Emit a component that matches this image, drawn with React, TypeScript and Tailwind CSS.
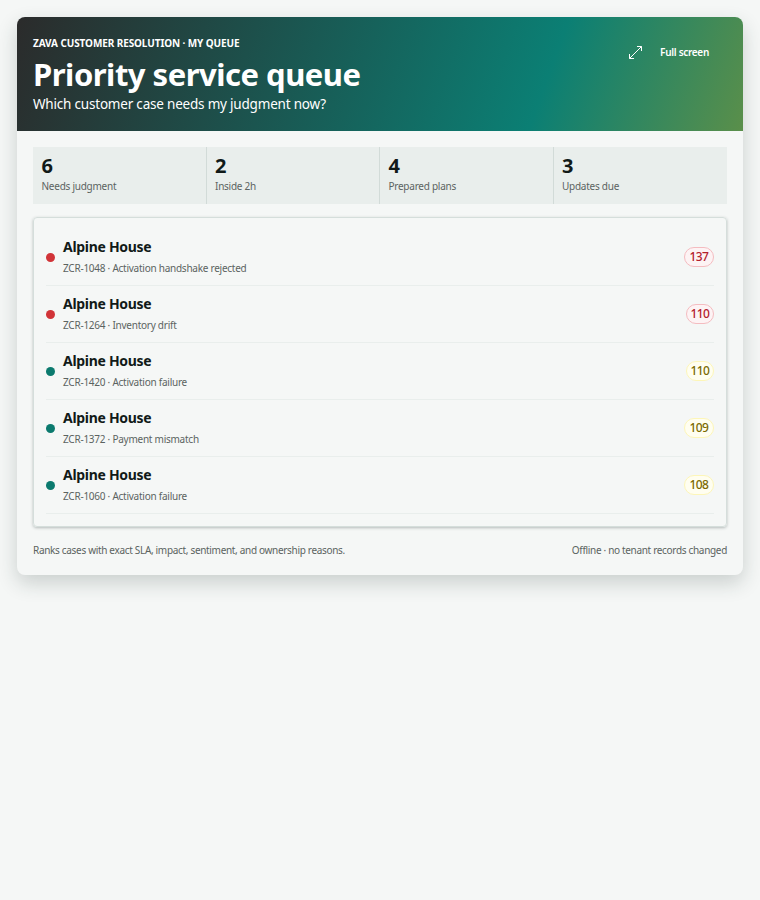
import React from "react";

const rows = [
  { id: "ZCR-1048", reason: "Activation handshake rejected", score: "137", red: true, w: "w-[30px]" },
  { id: "ZCR-1264", reason: "Inventory drift", score: "110", red: true, w: "w-[28px]" },
  { id: "ZCR-1420", reason: "Activation failure", score: "110", red: false, w: "w-[28px]" },
  { id: "ZCR-1372", reason: "Payment mismatch", score: "109", red: false, w: "w-[30px]" },
  { id: "ZCR-1060", reason: "Activation failure", score: "108", red: false, w: "w-[30px]" },
];

const stats = [
  { n: "6", label: "Needs judgment" },
  { n: "2", label: "Inside 2h" },
  { n: "4", label: "Prepared plans" },
  { n: "3", label: "Updates due" },
];

export default function App() {
  return (
    <div className="min-h-[900px] bg-[#f5f7f6] p-[17px] font-['Noto_Sans','Open_Sans',sans-serif] text-[#111a18]">
      <div className="overflow-hidden rounded-lg bg-[#f5f7f6] shadow-[0_8px_20px_rgba(30,50,45,0.2)]">
        <header className="flex h-[114px] items-start justify-between bg-[linear-gradient(110deg,#2b2b2b_0%,#0b7f74_72%,#5a8f4a_100%)] pl-4 pr-[34px] text-white">
          <div className="pt-[19px]">
            <div className="text-[10px] leading-[15px] font-bold tracking-[-0.1px]">ZAVA CUSTOMER RESOLUTION · MY QUEUE</div>
            <h1 className="mt-[3px] text-[31px] leading-[40px] font-bold tracking-[-0.5px]">Priority service queue</h1>
            <p className="mt-[1px] text-[13.5px] leading-[18px] tracking-[-0.2px]">Which customer case needs my judgment now?</p>
          </div>
          <button className="mt-[28px] flex items-center gap-[18px] text-[10px] leading-[15px] font-semibold tracking-[-0.3px]">
            <svg width="13" height="13" viewBox="0 0 13 13" fill="none" stroke="currentColor" strokeWidth="1">
              <path d="M0.5 12.5 L12.5 0.5 M8 0.5 H12.5 V5 M0.5 8 V12.5 H5" />
            </svg>
            Full screen
          </button>
        </header>
        <main className="px-4 pt-4 pb-[18px]">
          <section className="grid h-[57px] grid-cols-4 bg-[#e9eeec]">
            {stats.map((s, i) => (
              <div key={s.label} className={`pr-2 pl-[8.5px] pt-[7px] ${i < 3 ? "border-r border-[#d2dbd8]" : ""}`}>
                <div className="text-xl leading-[24px] font-bold">{s.n}</div>
                <div className="mt-[1px] text-[10px] leading-[14px] tracking-[-0.25px] text-[#5b6361]">{s.label}</div>
              </div>
            ))}
          </section>
          <section className="mt-[13px] h-[310px] rounded border border-[#d5dedb] px-3 pt-[11px] shadow-[0_1px_3px_rgba(30,50,45,0.3)]">
            {rows.map((r) => (
              <div key={r.id} className="flex h-[57px] items-center border-b border-[#e9eeec]">
                <span className={`h-[9px] w-[9px] shrink-0 rounded-full ${r.red ? "bg-[#d13438]" : "bg-[#0b7a6e]"}`} />
                <div className="ml-2 min-w-0 flex-1 pb-[1px]">
                  <div className="text-sm leading-[18px] font-bold tracking-[-0.3px]">Alpine House</div>
                  <div className="mt-[5px] text-[10px] leading-[14px] tracking-[-0.25px] text-[#5b6361]">
                    {r.id} · {r.reason}
                  </div>
                </div>
                <span
                  className={`${r.w} rounded-full border text-center text-xs leading-[18px] font-medium tracking-[-0.6px] ${
                    r.red ? "border-[#f4bcc0] bg-[#fdf3f4] text-[#b3202c]" : "border-[#fdf6b8] bg-[#fffef0] text-[#7a6a00]"
                  }`}
                >
                  {r.score}
                </span>
              </div>
            ))}
          </section>
          <footer className="mt-[16px] flex justify-between text-[10px] leading-[14px] tracking-[-0.32px] text-[#5b6361]">
            <span>Ranks cases with exact SLA, impact, sentiment, and ownership reasons.</span>
            <span>Offline · no tenant records changed</span>
          </footer>
        </main>
      </div>
    </div>
  );
}
